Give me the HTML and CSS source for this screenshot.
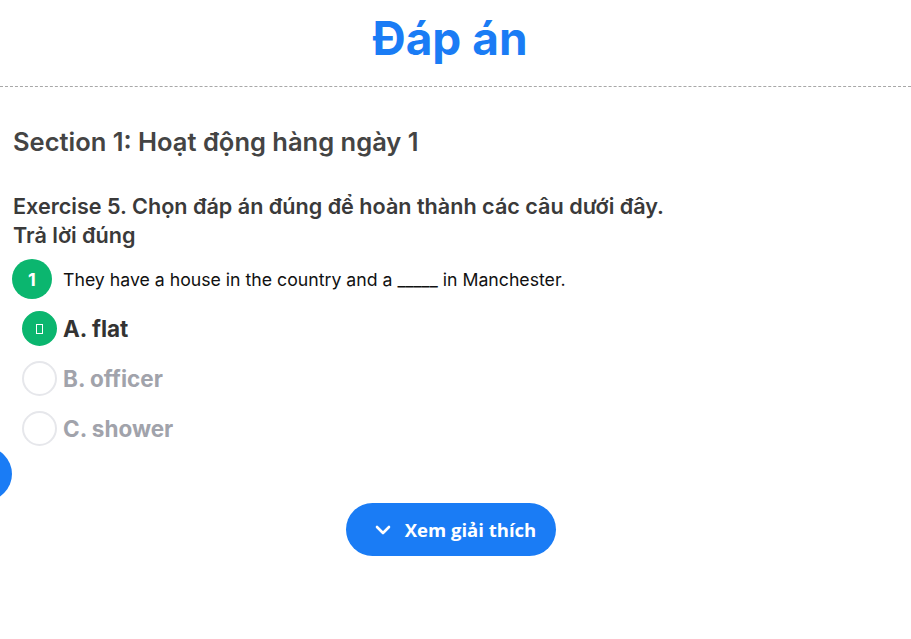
FILE: index.html
```html
<!DOCTYPE html>
<html lang="vi">
<head>
<meta charset="utf-8">
<link rel="stylesheet" href="styles.css">
</head>
<body>
<header class="header">
  <h1 class="title">Đáp án</h1>
</header>
<main class="content">
  <h2 class="section">Section 1: Hoạt động hàng ngày 1</h2>
  <h3 class="exercise">Exercise 5. Chọn đáp án đúng để hoàn thành các câu dưới đây.<br>Trả lời đúng</h3>
  <div class="question">
    <span class="qnum">1</span>
    <span class="qtext">They have a house in the country and a _____ in Manchester.</span>
  </div>
  <ul class="options">
    <li class="option correct"><span class="radio"><span class="tofu"></span></span><span class="label">A. flat</span></li>
    <li class="option"><span class="radio"></span><span class="label">B. officer</span></li>
    <li class="option"><span class="radio"></span><span class="label">C. shower</span></li>
  </ul>
  <div class="actions">
    <button class="explain">
      <svg width="16" height="10" viewBox="0 0 16 10"><path d="M2 2 L8 8 L14 2" fill="none" stroke="#fff" stroke-width="2.6" stroke-linecap="round" stroke-linejoin="round"/></svg>
      <span>Xem giải thích</span>
    </button>
  </div>
</main>
<div class="float-btn"></div>
</body>
</html>
```
FILE: styles.css
```css
* { box-sizing: border-box; }
html, body { margin: 0; padding: 0; background: #fff; }
body {
  font-family: Inter, "Noto Sans", sans-serif;
  color: #444;
  width: 911px;
  height: 639px;
  overflow: hidden;
  position: relative;
}
.header {
  border-bottom: 1px dashed #a8a8a8;
  padding: 8px 11px 17px 0;
  text-align: center;
}
.title {
  margin: 0;
  font-size: 46px;
  font-weight: 700;
  line-height: 61px;
  color: #1a7cf5;
}
.content {
  padding: 0 21px 0 12px;
}
.section {
  margin: 39px 0 0 1px;
  font-size: 25.5px;
  font-weight: 600;
  line-height: 32px;
  color: #444;
}
.exercise {
  margin: 34px 0 0 1px;
  font-size: 21.6px;
  font-weight: 600;
  line-height: 29px;
  color: #3a3a3a;
}
.question {
  display: flex;
  align-items: center;
  gap: 11px;
  margin-top: 9px;
}
.qnum {
  width: 40px;
  height: 40px;
  border-radius: 50%;
  background: #0bb66f;
  color: #fff;
  font-weight: 700;
  font-size: 18px;
  display: flex;
  align-items: center;
  justify-content: center;
}
.qtext {
  font-size: 17.7px;
  color: #111;
}
.options {
  list-style: none;
  margin: 12px 0 0 0;
  padding: 0 0 0 10px;
  display: flex;
  flex-direction: column;
  gap: 15px;
}
.option {
  display: flex;
  align-items: center;
  gap: 6px;
  height: 35px;
}
.radio {
  width: 35px;
  height: 35px;
  border-radius: 50%;
  border: 2px solid #e6e7eb;
  display: flex;
  align-items: center;
  justify-content: center;
}
.correct .radio {
  background: #0bb66f;
  border-color: #0bb66f;
}
.tofu {
  width: 7px;
  height: 10px;
  border: 1px solid #fff;
}
.label {
  font-size: 22.5px;
  font-weight: 700;
  color: #a1a3ab;
}
.correct .label { color: #333; }
.actions {
  display: flex;
  justify-content: center;
  margin-top: 57px;
}
.explain {
  display: flex;
  align-items: center;
  gap: 14px;
  height: 53px;
  padding: 0 20px 0 29px;
  border: none;
  border-radius: 27px;
  background: #1a7cf5;
  color: #fff;
  font-family: "Open Sans", "Noto Sans", sans-serif;
  font-size: 18.5px;
  font-weight: 700;
}
.float-btn {
  position: absolute;
  left: -42px;
  top: 447px;
  width: 54px;
  height: 54px;
  border-radius: 50%;
  background: #1a7cf5;
}
```
